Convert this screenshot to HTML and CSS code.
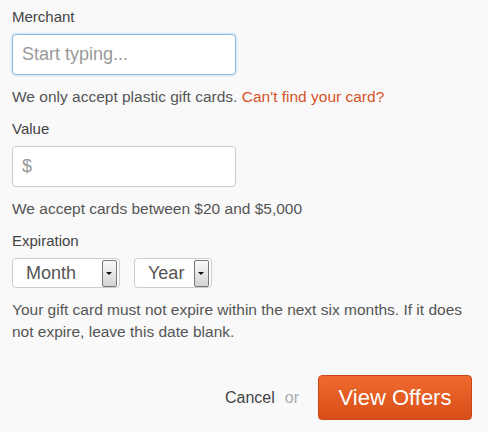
FILE: index.html
```html
<!DOCTYPE html>
<html lang="en">
<head>
  <meta charset="UTF-8">
  <title>Sell a gift card</title>
  <link rel="stylesheet" href="styles.css">
</head>
<body>

<form class="card-form" onsubmit="return false">
  <div class="field">
    <label for="merchant">Merchant</label>
    <input type="text" id="merchant" class="text-input focused" placeholder="Start typing...">
    <p class="help">We only accept plastic gift cards. <a href="#">Can't find your card?</a></p>
  </div>

  <div class="field">
    <label for="value">Value</label>
    <input type="text" id="value" class="text-input" placeholder="$">
    <p class="help">We accept cards between $20 and $5,000</p>
  </div>

  <div class="field">
    <label for="month">Expiration</label>
    <div class="expiry">
      <div class="select-box month">
        <select id="month">
          <option>Month</option>
          <option>01</option><option>02</option><option>03</option>
          <option>04</option><option>05</option><option>06</option>
          <option>07</option><option>08</option><option>09</option>
          <option>10</option><option>11</option><option>12</option>
        </select>
        <span class="arrow"></span>
      </div>
      <div class="select-box year">
        <select id="year">
          <option>Year</option>
        </select>
        <span class="arrow"></span>
      </div>
    </div>
    <p class="help">Your gift card must not expire within the next six months. If it does not expire, leave this date blank.</p>
  </div>

  <div class="actions">
    <a href="#" class="cancel">Cancel</a>
    <span class="or">or</span>
    <button type="submit" class="btn-offers">View Offers</button>
  </div>
</form>

</body>
</html>
```

FILE: styles.css
```css
body {
  margin: 0;
  background: #f9f9f9;
  font-family: "Liberation Sans", Arial, sans-serif;
  color: #444;
}
.card-form {
  padding: 7px 16px 0 12px;
}
.field { margin-bottom: 11px; }
.field label {
  display: block;
  font-size: 15px;
  line-height: 20px;
  margin-bottom: 7px;
  color: #444;
}
.text-input {
  display: block;
  box-sizing: border-box;
  width: 224px;
  height: 41px;
  padding: 0 9px;
  border: 1px solid #ccc;
  border-radius: 4px;
  background: #fff;
  font-family: inherit;
  font-size: 18px;
  color: #444;
  outline: none;
}
.text-input::placeholder { color: #999; }
.text-input.focused {
  border-color: #8fb9df;
  box-shadow: 0 0 3px rgba(82,168,236,0.55);
}
.help {
  max-width: 460px;
  margin: 11px 0 0;
  font-size: 15.5px;
  line-height: 22px;
  color: #555;
}
.help a {
  color: #d5532a;
  text-decoration: none;
}
.expiry {
  display: flex;
  gap: 14px;
  margin-top: 1px;
}
.select-box {
  display: flex;
  align-items: center;
  box-sizing: border-box;
  height: 30px;
  padding: 0 2px 0 0;
  border: 1px solid #ccc;
  border-radius: 4px;
  background: #fff;
}
.select-box.month { width: 108px; }
.select-box.year { width: 78px; }
.select-box select {
  flex: 1;
  min-width: 0;
  -webkit-appearance: none;
  appearance: none;
  border: none;
  background: transparent;
  padding: 0 0 0 13px;
  font-family: inherit;
  font-size: 18px;
  color: #555;
  outline: none;
}
.arrow {
  position: relative;
  box-sizing: border-box;
  width: 15px;
  height: 27px;
  border: 1px solid #777;
  border-radius: 2px;
  background: linear-gradient(#fafafa, #d4d4d4);
}
.arrow::after {
  content: "";
  position: absolute;
  left: 3px;
  top: 11px;
  border-left: 3px solid transparent;
  border-right: 3px solid transparent;
  border-top: 3px solid #111;
}
.actions {
  display: flex;
  justify-content: flex-end;
  align-items: center;
  margin-top: 32px;
  font-size: 16px;
}
.cancel {
  color: #444;
  text-decoration: none;
}
.or {
  color: #aaa;
  margin: 0 19px 0 10px;
}
.btn-offers {
  width: 154px;
  height: 45px;
  border: 1px solid #c9481a;
  border-radius: 4px;
  background: linear-gradient(#f06a2e, #d84e18);
  color: #fff;
  font-family: inherit;
  font-size: 22px;
  cursor: pointer;
  box-shadow: 0 1px 1px rgba(0,0,0,0.15);
}
```
